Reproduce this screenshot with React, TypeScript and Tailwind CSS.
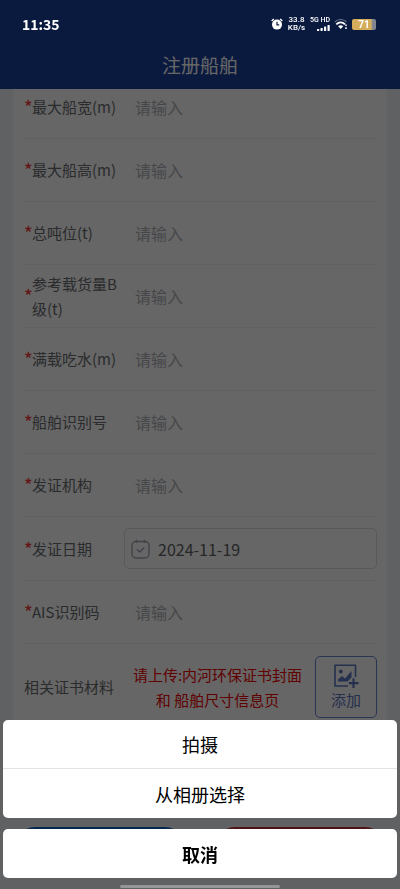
const fields = [
  { id: 'width', label: '最大船宽(m)' },
  { id: 'height', label: '最大船高(m)' },
  { id: 'tonnage', label: '总吨位(t)' },
  { id: 'cargoB', label: '参考载货量B级(t)' },
  { id: 'draft', label: '满载吃水(m)' },
  { id: 'shipNo', label: '船舶识别号' },
  { id: 'issuer', label: '发证机构' },
];

function StatusBar() {
  return (
    <div className="absolute inset-x-0 top-0 z-30 flex h-12 items-center justify-between pl-[22px] pr-6 text-white">
      <span className="text-sm font-bold">11:35</span>
      <div className="flex items-center gap-1 font-['Roboto',sans-serif]">
        <svg width="12" height="12" viewBox="0 0 12 12" fill="none" stroke="currentColor">
          <circle cx="6" cy="6.6" r="5" fill="currentColor" stroke="none" />
          <path d="M0.7 3 2.8 1M11.3 3 9.2 1" strokeWidth="1.4" />
          <path d="M6 3.8V6.9H8.2" stroke="#0b1a3f" strokeWidth="1.2" />
        </svg>
        <div className="flex w-[19px] flex-col items-center text-[8px] leading-[8px] font-medium">
          <span>33.8</span>
          <span>KB/s</span>
        </div>
        <div className="flex w-5 flex-col items-end gap-px">
          <div className="text-[7px] leading-[7px] font-medium whitespace-nowrap">5G HD</div>
          <svg width="13" height="6" viewBox="0 0 13 6" fill="currentColor">
            <rect x="0" y="4" width="2.2" height="2" rx="0.5" />
            <rect x="3.5" y="3" width="2.2" height="3" rx="0.5" />
            <rect x="7" y="1.5" width="2.2" height="4.5" rx="0.5" />
            <rect x="10.5" y="0" width="2.2" height="6" rx="0.5" />
          </svg>
        </div>
        <svg width="14" height="12" viewBox="0 0 14 12" fill="none" stroke="currentColor">
          <path d="M0.8 3.9C4 0.7 9.4 0.7 12.6 3.9" strokeWidth="1.2" opacity="0.4" />
          <path d="M2.3 6.3C4.8 3.7 8.6 3.7 11 6.3" strokeWidth="1.8" />
          <path d="M4.1 8.2C5.6 7 7.7 7 9.2 8.2L6.7 11Z" fill="currentColor" stroke="none" />
          <path d="M12 6.5V8.1M12 9.3V10.9" strokeWidth="1.5" />
        </svg>
        <div className="flex h-[11px] w-6 items-center justify-center rounded-xs bg-linear-to-r from-[#d3ad5c] from-80% to-[#80858f] to-85% text-[10px] leading-[11px] font-bold">
          71
        </div>
      </div>
    </div>
  );
}

function FieldLabel({ htmlFor, text }: { htmlFor: string; text: string }) {
  return (
    <label htmlFor={htmlFor} className="flex w-[100px] shrink-0 items-center text-[15px] leading-[25px] text-[#6a6c70]">
      <span className="w-2 shrink-0 text-lg leading-[25px] font-medium text-[#f53f3f]">*</span>
      <span>{text}</span>
    </label>
  );
}

function TextRow({ id, label }: { id: string; label: string }) {
  return (
    <div className="flex min-h-[63px] items-center border-b border-[#f0f0f2] pt-[5px] pb-1.5">
      <FieldLabel htmlFor={id} text={label} />
      <input
        id={id}
        placeholder="请输入"
        className="min-w-0 flex-1 px-[11px] text-[#303133] outline-none placeholder:text-[#b0b2b8]"
      />
    </div>
  );
}

function CalendarIcon() {
  return (
    <svg width="19" height="20" viewBox="0 0 19 20" fill="none" stroke="#a4a6b4" strokeWidth="1.4" className="shrink-0">
      <rect x="1" y="2.5" width="17" height="16.5" rx="4" />
      <path d="M5.5 0.8V4M13.5 0.8V4" />
      <path d="M6.3 10.8 8.8 13 12.8 9" strokeLinecap="round" strokeLinejoin="round" />
    </svg>
  );
}

function AddPhotoIcon() {
  return (
    <svg width="26" height="26" viewBox="0 0 26 26" fill="none" stroke="currentColor" strokeWidth="1.6">
      <path d="M22.5 14V2.2H2V23H15" />
      <circle cx="7.8" cy="8.5" r="1.9" fill="currentColor" stroke="none" />
      <path d="M5 18.5V16.5L9 13 12 15.5 18.5 8V14.5L14.5 18.5Z" fill="currentColor" stroke="none" />
      <path d="M20.5 15.5V25M15.8 20.2H25.5" strokeWidth="2.2" />
    </svg>
  );
}

function ActionSheet() {
  return (
    <div className="fixed inset-x-0 bottom-0 z-20 px-[3px] pb-[11px] text-lg text-black">
      <div className="overflow-hidden rounded-[5px] bg-white">
        <button className="block h-[49px] w-full border-b border-[#e3e3e3]">拍摄</button>
        <button className="block h-[49px] w-full">从相册选择</button>
      </div>
      <button className="mt-[11px] block h-[49px] w-full rounded-[5px] bg-white font-bold">取消</button>
      <div className="absolute bottom-px left-1/2 h-[3px] w-40 -translate-x-1/2 rounded-full bg-[#969696]" />
    </div>
  );
}

export default function App() {
  return (
    <div className="relative h-screen overflow-hidden bg-[#eff2f6] font-['Noto_Sans_CJK_SC',sans-serif] text-base">
      <header className="absolute inset-x-0 top-0 z-10 flex h-[89px] items-end justify-center bg-[#1b419e] pb-2.5">
        <h1 className="text-[19px] leading-7 text-white">注册船舶</h1>
      </header>
      <StatusBar />

      <main className="px-[13px] pt-[76px]">
        <form className="bg-white pr-2.5 pb-4 pl-[11px]">
          {fields.map(field => (
            <TextRow key={field.id} id={field.id} label={field.label} />
          ))}

          <div className="flex items-center border-b border-[#f0f0f2] py-[11px]">
            <FieldLabel htmlFor="issueDate" text="发证日期" />
            <div className="flex h-[41px] min-w-0 flex-1 items-center gap-2 rounded-[5px] border border-[#dcdfe6] px-1.5">
              <CalendarIcon />
              <input id="issueDate" defaultValue="2024-11-19" className="min-w-0 flex-1 text-[#606266] outline-none" />
            </div>
          </div>

          <TextRow id="ais" label="AIS识别码" />

          <div className="flex items-center pt-3">
            <span className="w-24 shrink-0 text-[15px] text-[#6a6c70]">相关证书材料</span>
            <p className="flex-1 text-center text-[15px] leading-[25px] text-[#f00000]">
              请上传:内河环保证书封面
              <br />和 船舶尺寸信息页
            </p>
            <button
              type="button"
              className="flex h-[62px] w-[62px] shrink-0 flex-col items-center justify-center rounded-[5px] border border-[#6784d4] text-[15px] text-[#5c78c4]"
            >
              <AddPhotoIcon />
              <span>添加</span>
            </button>
          </div>
        </form>

        <div className="mt-[93px] flex justify-between">
          <button className="h-11 w-[174px] rounded-full bg-[#0c62c4] text-white">提交</button>
          <button className="h-11 w-[174px] rounded-full bg-[#c83030] text-white">返回</button>
        </div>
      </main>

      <div className="fixed inset-0 z-10 bg-black/60" />
      <ActionSheet />
    </div>
  );
}
